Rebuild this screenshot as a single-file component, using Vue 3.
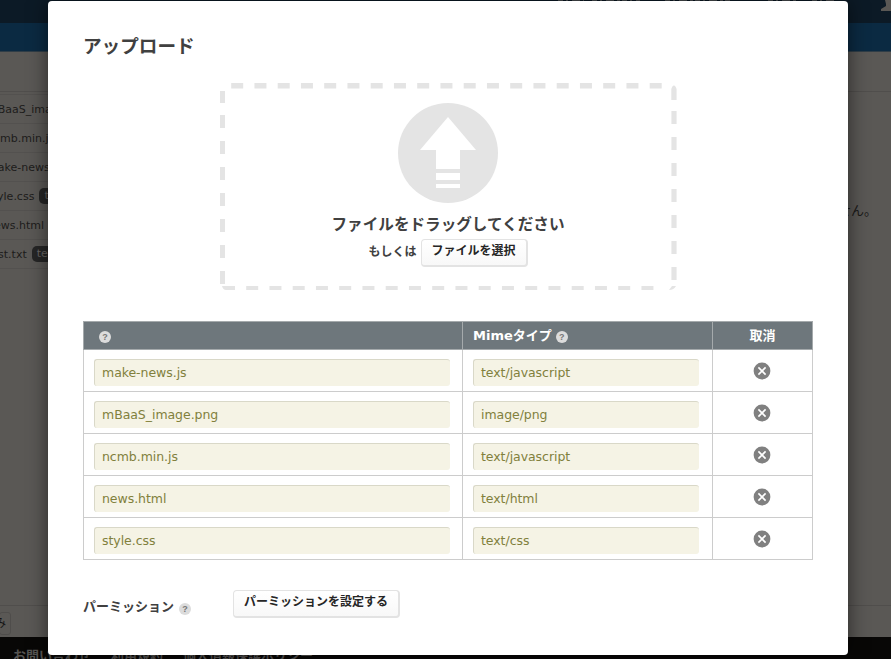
<script setup>
const files = [
  { name: 'make-news.js', mime: 'text/javascript' },
  { name: 'mBaaS_image.png', mime: 'image/png' },
  { name: 'ncmb.min.js', mime: 'text/javascript' },
  { name: 'news.html', mime: 'text/html' },
  { name: 'style.css', mime: 'text/css' },
]
const stored = [
  { name: 'mBaaS_image.png', tag: '' },
  { name: 'ncmb.min.js', tag: '' },
  { name: 'make-news.js', tag: '' },
  { name: 'style.css', tag: 'text' },
  { name: 'news.html', tag: '' },
  { name: 'test.txt', tag: 'text' },
]
</script>

<template>
  <div class="screen">
    <div class="page">
      <header class="topbar">
        <svg class="menu-edge" width="276" height="1" viewBox="0 0 276 1">
          <path d="M0 .5H26M34 .5H82M107 .5H175M210 .5H238M254 .5H276" stroke="#4d5053" stroke-dasharray="5 3 2 4 8 3 3 2" />
        </svg>
        <svg class="user" width="10" height="12" viewBox="0 0 10 12">
          <path d="M4 0H10V11H0V9L5 6V4Z" fill="#5a5855" />
        </svg>
      </header>
      <div class="bluebar"></div>
      <main class="body">
        <div class="toolbar"></div>
        <div class="columns">
          <ul class="stored">
            <li v-for="s in stored" :key="s.name">
              <span>{{ s.name }}</span><b v-if="s.tag">{{ s.tag }}</b>
            </li>
          </ul>
          <p class="notice">せん。</p>
        </div>
        <div class="pager"><span>み</span></div>
      </main>
      <footer class="footer">
        <span>お問い合わせ</span><span>利用規約</span><span>個人情報保護ポリシー</span>
      </footer>
    </div>

    <section class="modal">
      <h1>アップロード</h1>
      <div class="drop">
        <svg class="dashes" width="458" height="208" viewBox="0 0 458 208" fill="none" stroke="#e4e4e4">
          <path d="M11.2 2.75H451" stroke-width="5.5" stroke-dasharray="12 11.25" />
          <path d="M2.5 8V20" stroke-width="5" />
          <path d="M2.5 32V202" stroke-width="5" stroke-dasharray="13 13" />
          <path d="M454 28V205" stroke-width="5.2" stroke-dasharray="13 13" />
          <path d="M26.2 205H440" stroke-width="4" stroke-dasharray="12 11.25" />
          <path d="M451.3 17V6Q452 3 454 2.2Q456 3.4 456.6 6V17Z" fill="#e4e4e4" stroke="none" />
          <path d="M2 203H15V207H6Q3 207 2 203Z" fill="#e4e4e4" stroke="none" />
          <path d="M456 203Q454 207 449 207L452 203Z" fill="#e4e4e4" stroke="none" />
        </svg>
        <div class="drop-body">
          <svg class="arrow" width="100" height="100" viewBox="0 0 100 100">
            <circle cx="50" cy="50" r="50" fill="#e4e4e4" />
            <path d="M50 14L78 47H62V66H38V47H22ZM38 70H62V77H38ZM38 81H62V85H38Z" fill="#fff" />
          </svg>
          <p class="drag">ファイルをドラッグしてください</p>
          <div class="choose"><span>もしくは</span><button>ファイルを選択</button></div>
        </div>
      </div>

      <table>
        <colgroup><col class="c1" /><col class="c2" /><col class="c3" /></colgroup>
        <thead>
          <tr>
            <th><div class="th first"><i class="help">?</i></div></th>
            <th><div class="th"><span>Mimeタイプ</span><i class="help">?</i></div></th>
            <th><div class="th last">取消</div></th>
          </tr>
        </thead>
        <tbody>
          <tr v-for="f in files" :key="f.name">
            <td><div class="field">{{ f.name }}</div></td>
            <td><div class="field mime">{{ f.mime }}</div></td>
            <td>
              <svg class="remove" width="18" height="18" viewBox="0 0 18 18">
                <circle cx="9" cy="9" r="8.4" fill="#808080" />
                <path d="M5.4 5.4L12.6 12.6M12.6 5.4L5.4 12.6" stroke="#fff" stroke-width="1.6" />
              </svg>
            </td>
          </tr>
        </tbody>
      </table>

      <div class="perm">
        <span class="label">パーミッション</span><i class="help">?</i>
        <button>パーミッションを設定する</button>
      </div>
    </section>
  </div>
</template>

<style>
body {
  margin: 0;
  overflow: hidden;
}
</style>

<style scoped>
.screen {
  position: relative;
  width: 891px;
  height: 659px;
  overflow: hidden;
  font-family: "DejaVu Sans", "Noto Sans CJK JP", sans-serif;
  color: #404040;
}
h1, p, ul { margin: 0; padding: 0; }
.page {
  display: flex;
  flex-direction: column;
  height: 659px;
  background: #5a5855;
}
.topbar {
  display: flex;
  justify-content: flex-end;
  gap: 47px;
  height: 23px;
  background: #0c1a26;
}
.bluebar { height: 29px; background: #0b2a42; box-sizing: border-box; border-bottom: 1px solid #2f3d47; }
.body { display: flex; flex-direction: column; height: 585px; }
.toolbar { height: 40px; border-bottom: 1px solid #504e4c; box-sizing: border-box; }
.columns { display: flex; justify-content: space-between; height: 513px; }
.stored { list-style: none; padding-top: 2px; width: 260px; }
.stored li {
  display: flex;
  align-items: center;
  gap: 5px;
  height: 29px;
  box-sizing: border-box;
  border-top: 1px solid #53514f;
  margin-left: -13px;
  font-size: 11px;
  color: #1d1c1b;
  white-space: nowrap;
}
.stored li:last-child { height: 30px; border-bottom: 1px solid #53514f; }
.stored b {
  padding: 0 5px;
  font-weight: normal;
  line-height: 16px;
  border-radius: 5px;
  background: #262626;
  color: #666462;
}
.notice {
  padding: 110px 14px 0 0;
  font-size: 13px;
  line-height: 18px;
  color: #1b1a19;
}
.pager { height: 32px; border-top: 1px solid #504e4c; box-sizing: border-box; padding-top: 6px; }
.pager span {
  display: block;
  box-sizing: border-box;
  width: 12px;
  height: 23px;
  margin-left: -1px;
  border: 1px solid #4f4d4b;
  border-radius: 3px;
  font-size: 11px;
  line-height: 22px;
  text-indent: -5px;
  color: #151414;
}
.footer {
  display: flex;
  gap: 20px;
  height: 22px;
  padding-left: 13px;
  background: #080706;
  color: #565452;
  font-size: 13px;
  font-weight: bold;
  line-height: 38px;
  overflow: hidden;
}
.modal {
  position: absolute;
  top: 1px;
  left: 48px;
  width: 800px;
  height: 654px;
  box-sizing: border-box;
  padding: 32px 35px 0;
  background: #fff;
  border-radius: 4px;
  box-shadow: 0 0 20px rgba(0, 0, 0, 0.55);
}
h1 {
  height: 50px;
  font-size: 18.6px;
  line-height: 27px;
}
.drop {
  display: grid;
  width: 458px;
  height: 208px;
  margin: 0 0 30px 137px;
}
.dashes, .drop-body { grid-area: 1 / 1; }
.drop-body {
  display: flex;
  flex-direction: column;
  align-items: center;
  width: 456px;
  padding-top: 20px;
}
.arrow { display: block; flex: none; }
.drag {
  margin-top: 9px;
  font-size: 15.6px;
  font-weight: bold;
  line-height: 26px;
}
.choose {
  display: flex;
  gap: 4px;
  margin-top: 1px;
  font-size: 12px;
  font-weight: bold;
  line-height: 27px;
}
button {
  box-sizing: border-box;
  height: 28px;
  padding: 0 10px 2px;
  border: 1px solid #e3e3e3;
  border-right-width: 2px;
  border-bottom-width: 2px;
  border-radius: 4px;
  background: linear-gradient(#fff, #f8f8f8);
  font: bold 12px/23px "DejaVu Sans", "Noto Sans CJK JP", sans-serif;
  color: #262626;
  white-space: nowrap;
}
table {
  width: 730px;
  table-layout: fixed;
  border-collapse: collapse;
}
.c1 { width: 379px; }
.c2 { width: 250px; }
.c3 { width: 100px; }
th {
  height: 27px;
  padding: 0;
  border: 1px solid #a5aaac;
  background: #6e777c;
  color: #fff;
  font-size: 13px;
}
.th {
  display: flex;
  align-items: center;
  gap: 4px;
  height: 27px;
  padding-left: 10px;
  line-height: 27px;
}
.th span { padding-bottom: 1px; }
.th.first { padding-left: 15px; }
.th.last { justify-content: center; padding: 0 0 1px; height: 26px; }
.help {
  display: block;
  width: 12px;
  height: 12px;
  margin-top: 2px;
  border-radius: 50%;
  background: #dcdcdc;
  color: #777;
  font: bold 9px/12px "Liberation Sans", sans-serif;
  text-align: center;
}
td {
  height: 41px;
  padding: 0;
  border: 1px solid #ccc;
}
.field {
  box-sizing: border-box;
  height: 27px;
  margin: 4px 12px 0 10px;
  padding-left: 7px;
  border: solid #d9d8c8;
  border-width: 1px 0 0 1px;
  border-radius: 3px;
  background: #f5f3e5;
  color: #81803c;
  font-size: 12.5px;
  letter-spacing: -0.05px;
  line-height: 26px;
}
.field.mime { margin-right: 13px; }
.remove { display: block; margin: 0 auto 0 40px; }
.perm { display: flex; align-items: center; margin-top: 30px; height: 28px; }
.label { font-size: 13px; font-weight: bold; line-height: 20px; padding-top: 6px; }
.perm .help { margin: 9px 42px 0 5px; }
</style>
